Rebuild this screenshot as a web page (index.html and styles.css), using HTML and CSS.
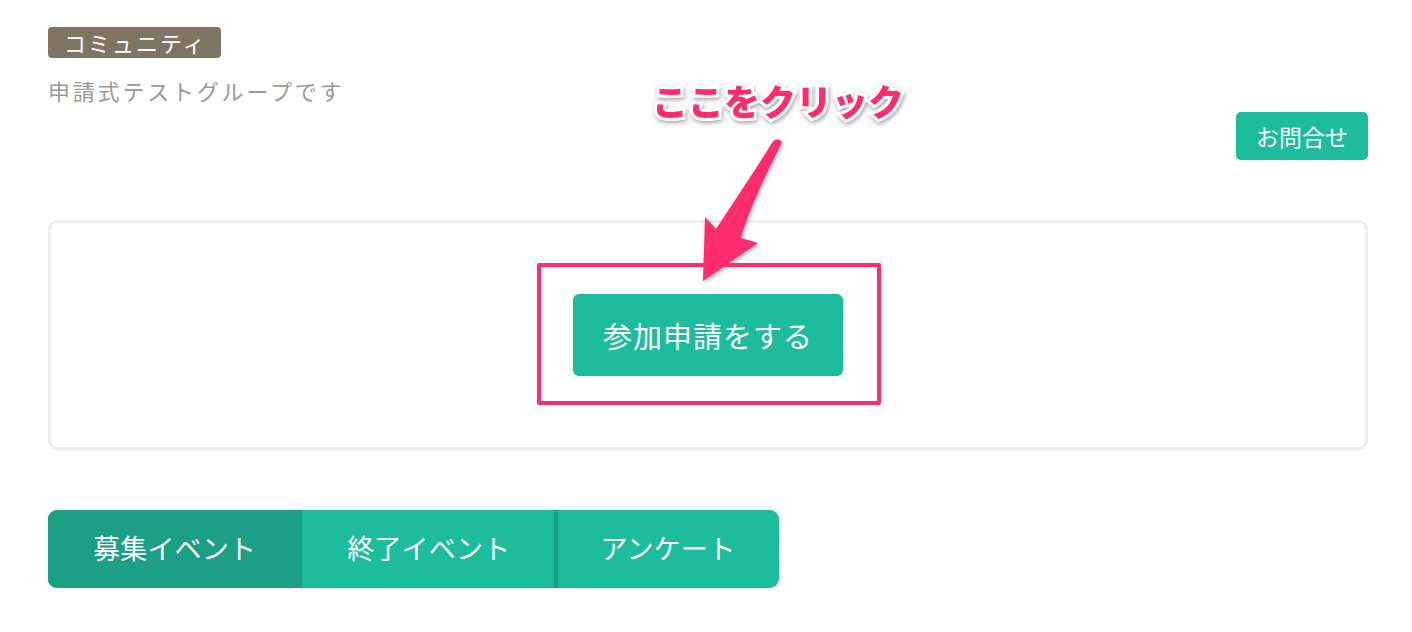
FILE: index.html
```html
<!DOCTYPE html>
<html lang="ja">
<head>
    <meta charset="UTF-8">
    <title>コミュニティ</title>
    <link rel="stylesheet" href="styles.css">
</head>
<body>
<div class="page">
    <span class="badge">コミュニティ</span>
    <p class="desc">申請式テストグループです</p>

    <div class="contact-row">
        <button class="btn btn-contact">お問合せ</button>
    </div>

    <div class="join-card">
        <button class="btn btn-join">参加申請をする</button>
    </div>

    <div class="tabs">
        <a class="tab active">募集イベント</a>
        <a class="tab">終了イベント</a>
        <a class="tab divided">アンケート</a>
    </div>

    <!-- 注釈 (スクリーンショット上の書き込み) -->
    <div class="note-text">ここをクリック</div>
    <svg class="note-arrow" width="100" height="160" viewBox="0 0 100 160">
        <path d="M82 13 Q87 6 92 12 C76 44 57 84 51 108 L68 113 L13 151 L15 87 L26 99 C45 70 64 42 82 13 Z" fill="#ff2d6d"/>
    </svg>
    <div class="note-box"></div>
</div>
</body>
</html>
```

FILE: styles.css
```css
body {
    margin: 0;
    font-family: "Noto Sans CJK JP", "Noto Sans", sans-serif;
    background: #fff;
    color: #333;
}
.page {
    position: relative;
    padding: 27px 44px 0 48px;
    height: 605px;
}
.badge {
    display: inline-block;
    height: 31px;
    line-height: 31px;
    padding: 0 14px 0 16px;
    background-color: #7f7564;
    color: #fff;
    font-size: 22px;
    letter-spacing: 2px;
    border-radius: 4px;
}
.desc {
    margin: 16px 0 0;
    font-size: 22px;
    line-height: 32px;
    letter-spacing: 2.8px;
    color: #999;
}
.btn {
    font-family: inherit;
    background-color: #1dbc9c;
    color: #fff;
    border: none;
    border-radius: 5px;
    cursor: pointer;
}
.contact-row {
    display: flex;
    justify-content: flex-end;
    margin-top: 6px;
}
.btn-contact {
    height: 48px;
    width: 132px;
    font-size: 23px;
    padding: 0;
}
.join-card {
    margin-top: 60px;
    height: 224px;
    border: 3px solid #ededed;
    border-radius: 9px;
    display: flex;
    align-items: center;
    justify-content: center;
}
.btn-join {
    width: 270px;
    height: 82px;
    font-size: 29px;
    letter-spacing: 1px;
    border-radius: 6px;
}
.tabs {
    display: inline-flex;
    margin-top: 60px;
    height: 78px;
    border-radius: 9px;
    overflow: hidden;
    background-color: #1dbc9c;
}
.tab {
    display: flex;
    align-items: center;
    padding: 0 44px 3px 45px;
    color: #fff;
    font-size: 27px;
    letter-spacing: 0.2px;
    cursor: pointer;
}
.tab.active {
    padding-right: 46px;
    background-color: #1b9f85;
}
.tab.divided {
    padding: 0 44px 3px 42px;
    border-left: 4px solid #1aa088;
}
.note-text {
    position: absolute;
    left: 652px;
    top: 74px;
    font-size: 36px;
    font-weight: 900;
    line-height: 52px;
    color: #ff2d6d;
    -webkit-text-stroke: 6px #fff;
    paint-order: stroke fill;
    filter: drop-shadow(1px 2px 2px rgba(0,0,0,0.35));
}
.note-arrow {
    position: absolute;
    left: 690px;
    top: 130px;
    filter: drop-shadow(1px 2px 2px rgba(0,0,0,0.3));
}
.note-box {
    position: absolute;
    left: 537px;
    top: 263px;
    width: 336px;
    height: 134px;
    border: 4px solid #ff2d6d;
    border-radius: 2px;
}
```
